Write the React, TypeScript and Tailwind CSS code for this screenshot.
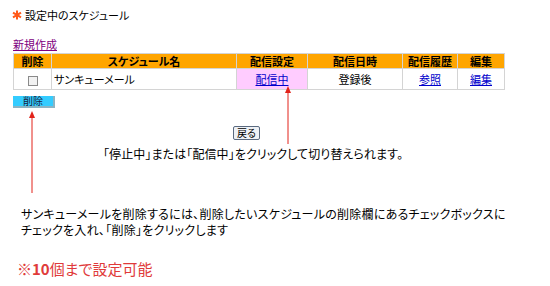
const th =
  'border border-[#d4d4d4] bg-[#ffa500] h-[15px] p-0 text-[11px] leading-[13px] font-bold text-black text-center';
const td = 'border border-[#d4d4d4] h-[21px] p-0 text-[11px] leading-[13px] text-center';

function Arrow({ x, top, bottom }: { x: number; top: number; bottom: number }) {
  const h = bottom - top;
  return (
    <svg
      className="absolute"
      style={{ left: x - 4, top }}
      width={8}
      height={h}
      viewBox={`0 0 8 ${h}`}
    >
      <polygon points="4,0 7,7 1,7" fill="#e2231a" />
      <line x1={4} y1={6} x2={4} y2={h} stroke="#e2231a" strokeWidth={1} />
    </svg>
  );
}

function Star() {
  return (
    <svg width={10} height={10} viewBox="0 0 10 10" className="mr-[3px]">
      <g stroke="#ff5a1a" strokeWidth={2} strokeLinecap="butt">
        <line x1={5} y1={0.5} x2={5} y2={9.5} />
        <line x1={1} y1={2.7} x2={9} y2={7.3} />
        <line x1={1} y1={7.3} x2={9} y2={2.7} />
      </g>
    </svg>
  );
}

export default function App() {
  return (
    <div className="relative w-[550px] h-[286px] overflow-hidden bg-white text-black font-['Noto_Sans_CJK_JP',sans-serif] [font-feature-settings:'palt']">
      <div className="pl-[12px] pt-[8px]">
        {/* title */}
        <div className="flex items-center h-[14px] text-[11px] leading-[14px]">
          <Star />
          <span>設定中のスケジュール</span>
        </div>

        <div className="mt-[16px] h-[13px] text-[11px] leading-[13px] pl-[1px]">
          <a href="#" className="text-[#800080] underline">新規作成</a>
        </div>

        <table className="mt-[2px] ml-[1px] border-collapse border border-[#c0c0c0] table-fixed w-[491px]">
          <colgroup>
            <col className="w-[38px]" />
            <col className="w-[185px]" />
            <col className="w-[71px]" />
            <col className="w-[95px]" />
            <col className="w-[55px]" />
            <col className="w-[47px]" />
          </colgroup>
          <thead>
            <tr>
              <th className={th}>削除</th>
              <th className={th}>スケジュール名</th>
              <th className={th}>配信設定</th>
              <th className={th}>配信日時</th>
              <th className={th}>配信履歴</th>
              <th className={th}>編集</th>
            </tr>
          </thead>
          <tbody>
            <tr>
              <td className={td}>
                <span className="inline-block w-[10px] h-[10px] border border-[#8a8a8a] bg-[#f2f2f2] align-middle" />
              </td>
              <td className={td + ' !text-left pl-[2px]'}>サンキューメール</td>
              <td className={td + ' bg-[#ffccff]'}>
                <a href="#" className="text-[#0000cc] underline">配信中</a>
              </td>
              <td className={td}>登録後</td>
              <td className={td}>
                <a href="#" className="text-[#0000cc] underline">参照</a>
              </td>
              <td className={td}>
                <a href="#" className="text-[#0000cc] underline">編集</a>
              </td>
            </tr>
          </tbody>
        </table>

        <button className="mt-[6px] ml-[1px] block w-[42px] h-[12px] bg-[#33ccff] border-r-2 border-b-2 border-[#8ab4c4] text-[10px] leading-[10px] text-[#1a1a3a]">
          削除
        </button>

        <button className="mt-[18px] ml-[221px] block w-[27px] h-[14px] rounded-[2px] border border-[#5a6a80] bg-[#eef1f5] text-[10px] leading-[12px]">
          戻る
        </button>

        <p className="mt-[6px] pl-[91px] text-[12px] leading-[16px] tracking-[0.1px]">
          「停止中」または「配信中」をクリックして切り替えられます。
        </p>

        <p className="mt-[44px] pl-[9px] text-[12px] leading-[16px] w-[530px] tracking-[0.25px]">
          サンキューメールを削除するには、削除したいスケジュールの削除欄にあるチェックボックスに
          <br />
          チェックを入れ、「削除」をクリックします
        </p>

        <p className="mt-[23px] pl-[5px] text-[15px] leading-[16px] text-[#e03a3a]">
          ※<span className="font-bold">10</span>個まで設定可能
        </p>
      </div>

      <Arrow x={32} top={111} bottom={193} />
      <Arrow x={288} top={86} bottom={144} />
    </div>
  );
}
